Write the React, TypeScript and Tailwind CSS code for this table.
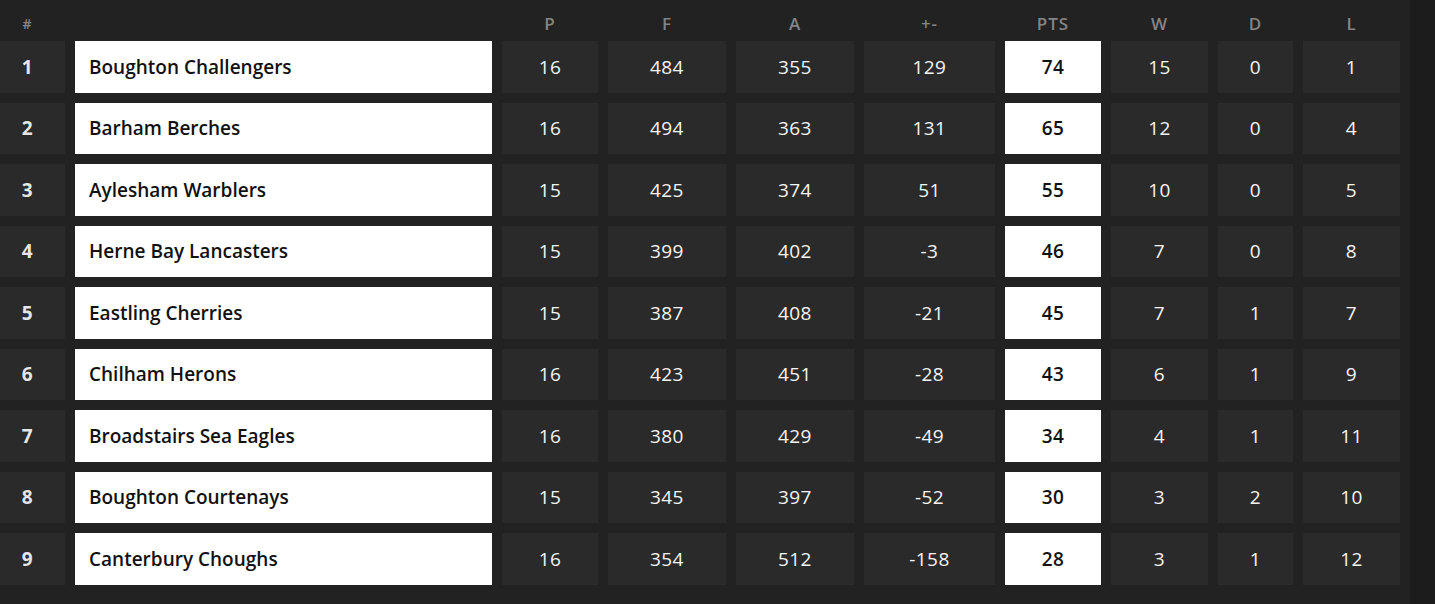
import React from 'react'

interface Team {
  name: string
  p: number
  f: number
  a: number
  diff: number
  pts: number
  w: number
  d: number
  l: number
}

const teams: Team[] = [
  { name: 'Boughton Challengers', p: 16, f: 484, a: 355, diff: 129, pts: 74, w: 15, d: 0, l: 1 },
  { name: 'Barham Berches', p: 16, f: 494, a: 363, diff: 131, pts: 65, w: 12, d: 0, l: 4 },
  { name: 'Aylesham Warblers', p: 15, f: 425, a: 374, diff: 51, pts: 55, w: 10, d: 0, l: 5 },
  { name: 'Herne Bay Lancasters', p: 15, f: 399, a: 402, diff: -3, pts: 46, w: 7, d: 0, l: 8 },
  { name: 'Eastling Cherries', p: 15, f: 387, a: 408, diff: -21, pts: 45, w: 7, d: 1, l: 7 },
  { name: 'Chilham Herons', p: 16, f: 423, a: 451, diff: -28, pts: 43, w: 6, d: 1, l: 9 },
  { name: 'Broadstairs Sea Eagles', p: 16, f: 380, a: 429, diff: -49, pts: 34, w: 4, d: 1, l: 11 },
  { name: 'Boughton Courtenays', p: 15, f: 345, a: 397, diff: -52, pts: 30, w: 3, d: 2, l: 10 },
  { name: 'Canterbury Choughs', p: 16, f: 354, a: 512, diff: -158, pts: 28, w: 3, d: 1, l: 12 }
]

const headers = ['#', '', 'P', 'F', 'A', '+-', 'PTS', 'W', 'D', 'L']

const Cell: React.FC<{ children: React.ReactNode; className?: string }> = ({ children, className = '' }) => (
  <div className={`h-[51.5px] flex items-center justify-center text-[19px] tracking-[0.4px] ${className}`}>{children}</div>
)

const App: React.FC = () => {
  return (
    <div
      className="min-h-screen bg-[#1c1c1c] flex"
      style={{ fontFamily: '"Open Sans", "Noto Sans", sans-serif' }}
    >
      <div className="w-[1410px] bg-[#222222] pr-[10px] pb-[20px]">
        <div className="grid grid-cols-[65px_417px_96px_118px_118px_131px_96px_97px_75px_97px] gap-x-[10px] gap-y-[10px]">
          {headers.map((h, i) => (
            <div
              key={i}
              className={`h-[31px] pt-[15px] text-center leading-none font-semibold text-[#858585] tracking-[1px] ${i === 0 ? 'pr-[10px] text-[14px] pt-[17px]' : 'text-[17px]'}`}
            >
              {h}
            </div>
          ))}
          {teams.map((t, i) => (
            <React.Fragment key={t.name}>
              <Cell className="bg-[#2a2a2a] pr-[10px] font-bold text-[#e6e6e6]">{i + 1}</Cell>
              <div className="h-[51.5px] flex items-center bg-white pl-[14px] text-[19px] font-semibold text-[#111111]">
                {t.name}
              </div>
              <Cell className="bg-[#2a2a2a] text-[#f5f5f5]">{t.p}</Cell>
              <Cell className="bg-[#2a2a2a] text-[#f5f5f5]">{t.f}</Cell>
              <Cell className="bg-[#2a2a2a] text-[#f5f5f5]">{t.a}</Cell>
              <Cell className="bg-[#2a2a2a] text-[#f5f5f5]">{t.diff}</Cell>
              <Cell className="bg-white font-semibold text-[#111111]">{t.pts}</Cell>
              <Cell className="bg-[#2a2a2a] text-[#f5f5f5]">{t.w}</Cell>
              <Cell className="bg-[#2a2a2a] text-[#f5f5f5]">{t.d}</Cell>
              <Cell className="bg-[#2a2a2a] text-[#f5f5f5]">{t.l}</Cell>
            </React.Fragment>
          ))}
        </div>
      </div>
    </div>
  )
}

export default App
